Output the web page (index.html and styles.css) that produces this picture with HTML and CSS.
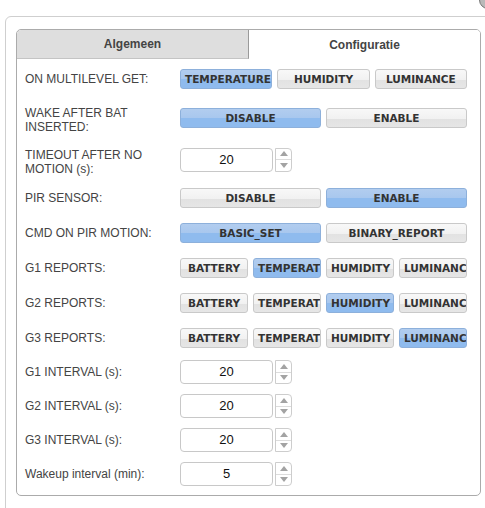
FILE: index.html
```html
<!DOCTYPE html>
<html>
<head>
<meta charset="utf-8">
<link rel="stylesheet" href="styles.css">
</head>
<body>
<div class="dialog">
  <span class="close-btn"></span>
  <div class="panel">
    <div class="tabs">
      <div class="tab tab-inactive">Algemeen</div>
      <div class="tab tab-active">Configuratie</div>
    </div>
    <div class="content">
      <div class="row">
        <div class="label">ON MULTILEVEL GET:</div>
        <div class="group">
          <span class="btn on">Temperature</span>
          <span class="btn">Humidity</span>
          <span class="btn">Luminance</span>
        </div>
      </div>
      <div class="row row-tall">
        <div class="label two">WAKE AFTER BAT INSERTED:</div>
        <div class="group">
          <span class="btn on">Disable</span>
          <span class="btn">Enable</span>
        </div>
      </div>
      <div class="row row-tall2">
        <div class="label two">TIMEOUT AFTER NO MOTION (s):</div>
        <div class="spinner">
          <span class="spin-input">20</span>
          <span class="spin-arrows"><span class="arrow up"></span><span class="arrow down"></span></span>
        </div>
      </div>
      <div class="row">
        <div class="label">PIR SENSOR:</div>
        <div class="group">
          <span class="btn">Disable</span>
          <span class="btn on">Enable</span>
        </div>
      </div>
      <div class="row">
        <div class="label">CMD ON PIR MOTION:</div>
        <div class="group">
          <span class="btn on">Basic_set</span>
          <span class="btn">Binary_report</span>
        </div>
      </div>
      <div class="row">
        <div class="label">G1 REPORTS:</div>
        <div class="group">
          <span class="btn">Battery</span>
          <span class="btn on">Temperature</span>
          <span class="btn">Humidity</span>
          <span class="btn">Luminance</span>
        </div>
      </div>
      <div class="row">
        <div class="label">G2 REPORTS:</div>
        <div class="group">
          <span class="btn">Battery</span>
          <span class="btn">Temperature</span>
          <span class="btn on">Humidity</span>
          <span class="btn">Luminance</span>
        </div>
      </div>
      <div class="row">
        <div class="label">G3 REPORTS:</div>
        <div class="group">
          <span class="btn">Battery</span>
          <span class="btn">Temperature</span>
          <span class="btn">Humidity</span>
          <span class="btn on">Luminance</span>
        </div>
      </div>
      <div class="row row-spin">
        <div class="label">G1 INTERVAL (s):</div>
        <div class="spinner">
          <span class="spin-input">20</span>
          <span class="spin-arrows"><span class="arrow up"></span><span class="arrow down"></span></span>
        </div>
      </div>
      <div class="row row-spin">
        <div class="label">G2 INTERVAL (s):</div>
        <div class="spinner">
          <span class="spin-input">20</span>
          <span class="spin-arrows"><span class="arrow up"></span><span class="arrow down"></span></span>
        </div>
      </div>
      <div class="row row-spin">
        <div class="label">G3 INTERVAL (s):</div>
        <div class="spinner">
          <span class="spin-input">20</span>
          <span class="spin-arrows"><span class="arrow up"></span><span class="arrow down"></span></span>
        </div>
      </div>
      <div class="row row-spin">
        <div class="label">Wakeup interval (min):</div>
        <div class="spinner">
          <span class="spin-input">5</span>
          <span class="spin-arrows"><span class="arrow up"></span><span class="arrow down"></span></span>
        </div>
      </div>
    </div>
  </div>
</div>
</body>
</html>
```
FILE: styles.css
```css
html, body {
  margin: 0;
  padding: 0;
  overflow: hidden;
  background: #fff;
}
body {
  width: 485px;
  height: 508px;
  font-family: "Liberation Sans", Arial, sans-serif;
}
.dialog {
  position: relative;
  margin: 16px 0 0 5px;
  width: 520px;
  height: 520px;
  box-sizing: border-box;
  border: 1px solid #cfcfcf;
  border-radius: 6px;
  padding: 12px 0 0 10px;
  background: #fff;
}
.close-btn {
  position: absolute;
  top: -26px;
  left: 473px;
  width: 16px;
  height: 16px;
  border-radius: 50%;
  background: #b9b9b9;
  border: 1px solid #777;
}
.panel {
  width: 465px;
  height: 467px;
  box-sizing: border-box;
  border: 1px solid #ababab;
  border-radius: 5px;
  overflow: hidden;
}
.tabs {
  display: flex;
  height: 29px;
}
.tab {
  font-weight: bold;
  font-size: 12px;
  color: #444;
  display: flex;
  align-items: center;
  justify-content: center;
  box-sizing: border-box;
}
.tab-inactive {
  width: 232px;
  background: #dedede;
  border-right: 1px solid #9a9a9a;
  border-bottom: 1px solid #c4c4c4;
  border-top-left-radius: 4px;
}
.tab-active {
  flex: 1;
  background: #fff;
}
.content {
  padding: 2px 12px 0 8px;
}
.row {
  display: flex;
  align-items: center;
  height: 35px;
}
.row-tall { height: 43px; }
.row-tall2 { height: 41px; }
.row-spin { height: 34px; }
.label {
  width: 155px;
  padding-right: 18px;
  box-sizing: border-box;
  font-size: 12px;
  line-height: 14px;
  color: #444;
}
.label.two {
  padding-top: 4px;
}
.group {
  display: flex;
  gap: 5px;
  width: 287px;
}
.btn {
  flex: 1;
  min-width: 0;
  height: 20px;
  box-sizing: border-box;
  border: 1px solid #c9c9c9;
  border-radius: 3px;
  background: linear-gradient(to bottom, #f8f8f8 0%, #f1f1f1 55%, #e2e2e2 56%, #e6e6e6 100%);
  font-family: "DejaVu Sans", Verdana, sans-serif;
  font-weight: bold;
  font-size: 10.5px;
  line-height: 18px;
  color: #333;
  text-transform: uppercase;
  text-align: center;
  white-space: nowrap;
  overflow: hidden;
  padding: 0 4px;
}
.btn.on {
  border-color: #8db0db;
  background: linear-gradient(to bottom, #b2cdef 0%, #a8c7ee 50%, #8fbbee 51%, #8fbbee 100%);
}
.spinner {
  display: flex;
  gap: 2px;
  height: 24px;
}
.spin-input {
  width: 93px;
  height: 24px;
  box-sizing: border-box;
  border: 1px solid #c8c8c8;
  border-radius: 4px;
  font-size: 13px;
  line-height: 22px;
  text-align: center;
  color: #111;
  background: #fff;
}
.spin-arrows {
  width: 17px;
  height: 24px;
  box-sizing: border-box;
  border: 1px solid #cdcdcd;
  border-radius: 0 4px 4px 0;
  display: flex;
  flex-direction: column;
}
.arrow {
  flex: 1;
  display: flex;
  align-items: center;
  justify-content: center;
}
.arrow.up {
  border-bottom: 1px solid #dcdcdc;
}
.arrow.up::before {
  content: "";
  border-left: 4px solid transparent;
  border-right: 4px solid transparent;
  border-bottom: 5px solid #a3a3a3;
}
.arrow.down::before {
  content: "";
  border-left: 4px solid transparent;
  border-right: 4px solid transparent;
  border-top: 5px solid #a3a3a3;
}
```
